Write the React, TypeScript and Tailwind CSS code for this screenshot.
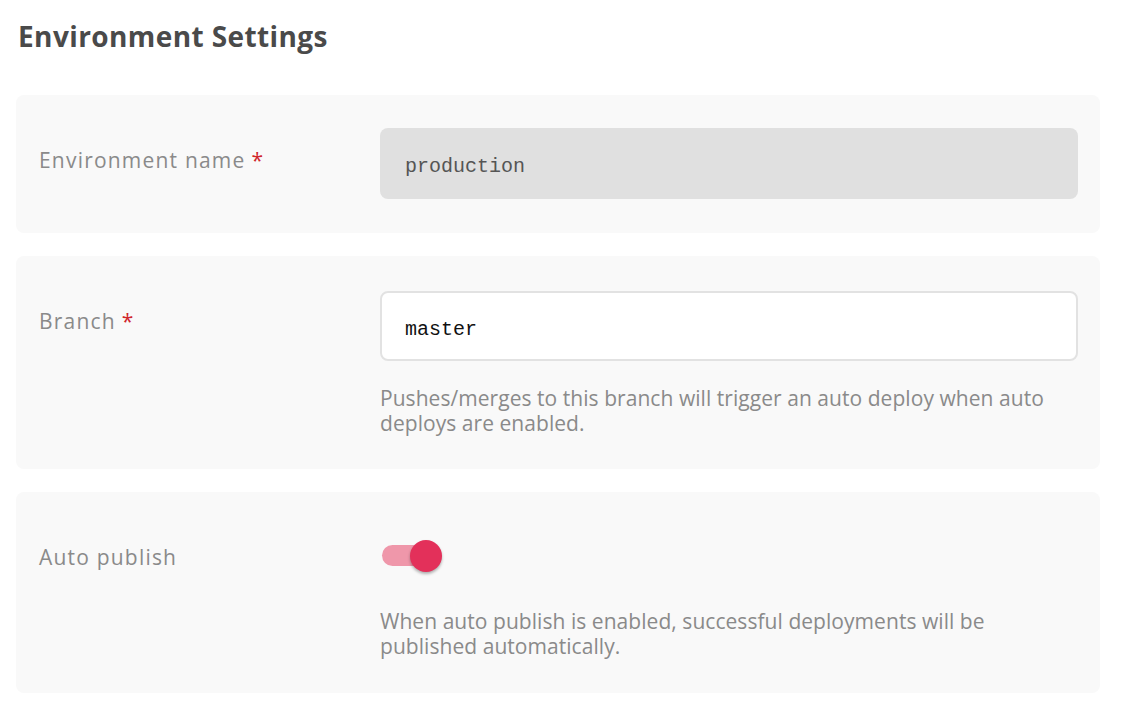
import React from "react";

const sans = { fontFamily: '"Open Sans", "Noto Sans", sans-serif' };
const mono = { fontFamily: '"Liberation Mono", "Courier New", monospace' };

function Card({ label, required, children }: { label: string; required?: boolean; children: React.ReactNode }) {
  return (
    <div className="flex rounded-lg bg-[#f9f9f9] pl-[23px] pr-[22px]">
      <div className="w-[341px] shrink-0 pt-[51px] text-[21px] leading-[28px] tracking-[1.2px] text-[#8a8a8a]" style={sans}>
        {label}
        {required && <span className="ml-[6px] text-[#d0262c]">*</span>}
      </div>
      <div className="flex-1">{children}</div>
    </div>
  );
}

export default function App() {
  return (
    <div className="min-h-[722px] w-[1122px] bg-white pl-[16px] pt-[16px]" style={sans}>
      <h1 className="pl-[2px] text-[28px] font-bold leading-[40px] tracking-[0.4px] text-[#4a4a4a]">Environment Settings</h1>
      <div className="mt-[39px] flex w-[1084px] flex-col gap-[23px]">
        <Card label="Environment name" required>
          <div className="pt-[33px] pb-[34px]">
            <div className="flex h-[71px] items-center rounded-lg bg-[#e0e0e0] px-[25px] pt-[7px] text-[20px] text-[#555]" style={mono}>
              production
            </div>
          </div>
        </Card>
        <Card label="Branch" required>
          <div className="pt-[35px] pb-[33px]">
            <div className="flex h-[70px] items-center rounded-lg border-2 border-[#e2e2e2] bg-white px-[23px] pt-[7px] text-[20px] text-[#111]" style={mono}>
              master
            </div>
            <p className="mt-[25px] text-[21px] leading-[25px] tracking-[0.05px] text-[#8a8a8a]">
              Pushes/merges to this branch will trigger an auto deploy when auto deploys are enabled.
            </p>
          </div>
        </Card>
        <Card label="Auto publish">
          <div className="pt-[48px] pb-[34px]">
            <div className="relative ml-[2px] h-[32px] w-[62px]">
              <div className="absolute left-0 top-[5px] h-[21px] w-[52px] rounded-full bg-[#ef97aa]" />
              <div className="absolute left-[28px] top-0 h-[32px] w-[32px] rounded-full bg-[#e3305a] shadow-[0_2px_3px_rgba(0,0,0,0.3)]" />
            </div>
            <p className="mt-[37px] text-[21px] leading-[25px] tracking-[0.05px] text-[#8a8a8a]">
              When auto publish is enabled, successful deployments will be published automatically.
            </p>
          </div>
        </Card>
      </div>
    </div>
  );
}
